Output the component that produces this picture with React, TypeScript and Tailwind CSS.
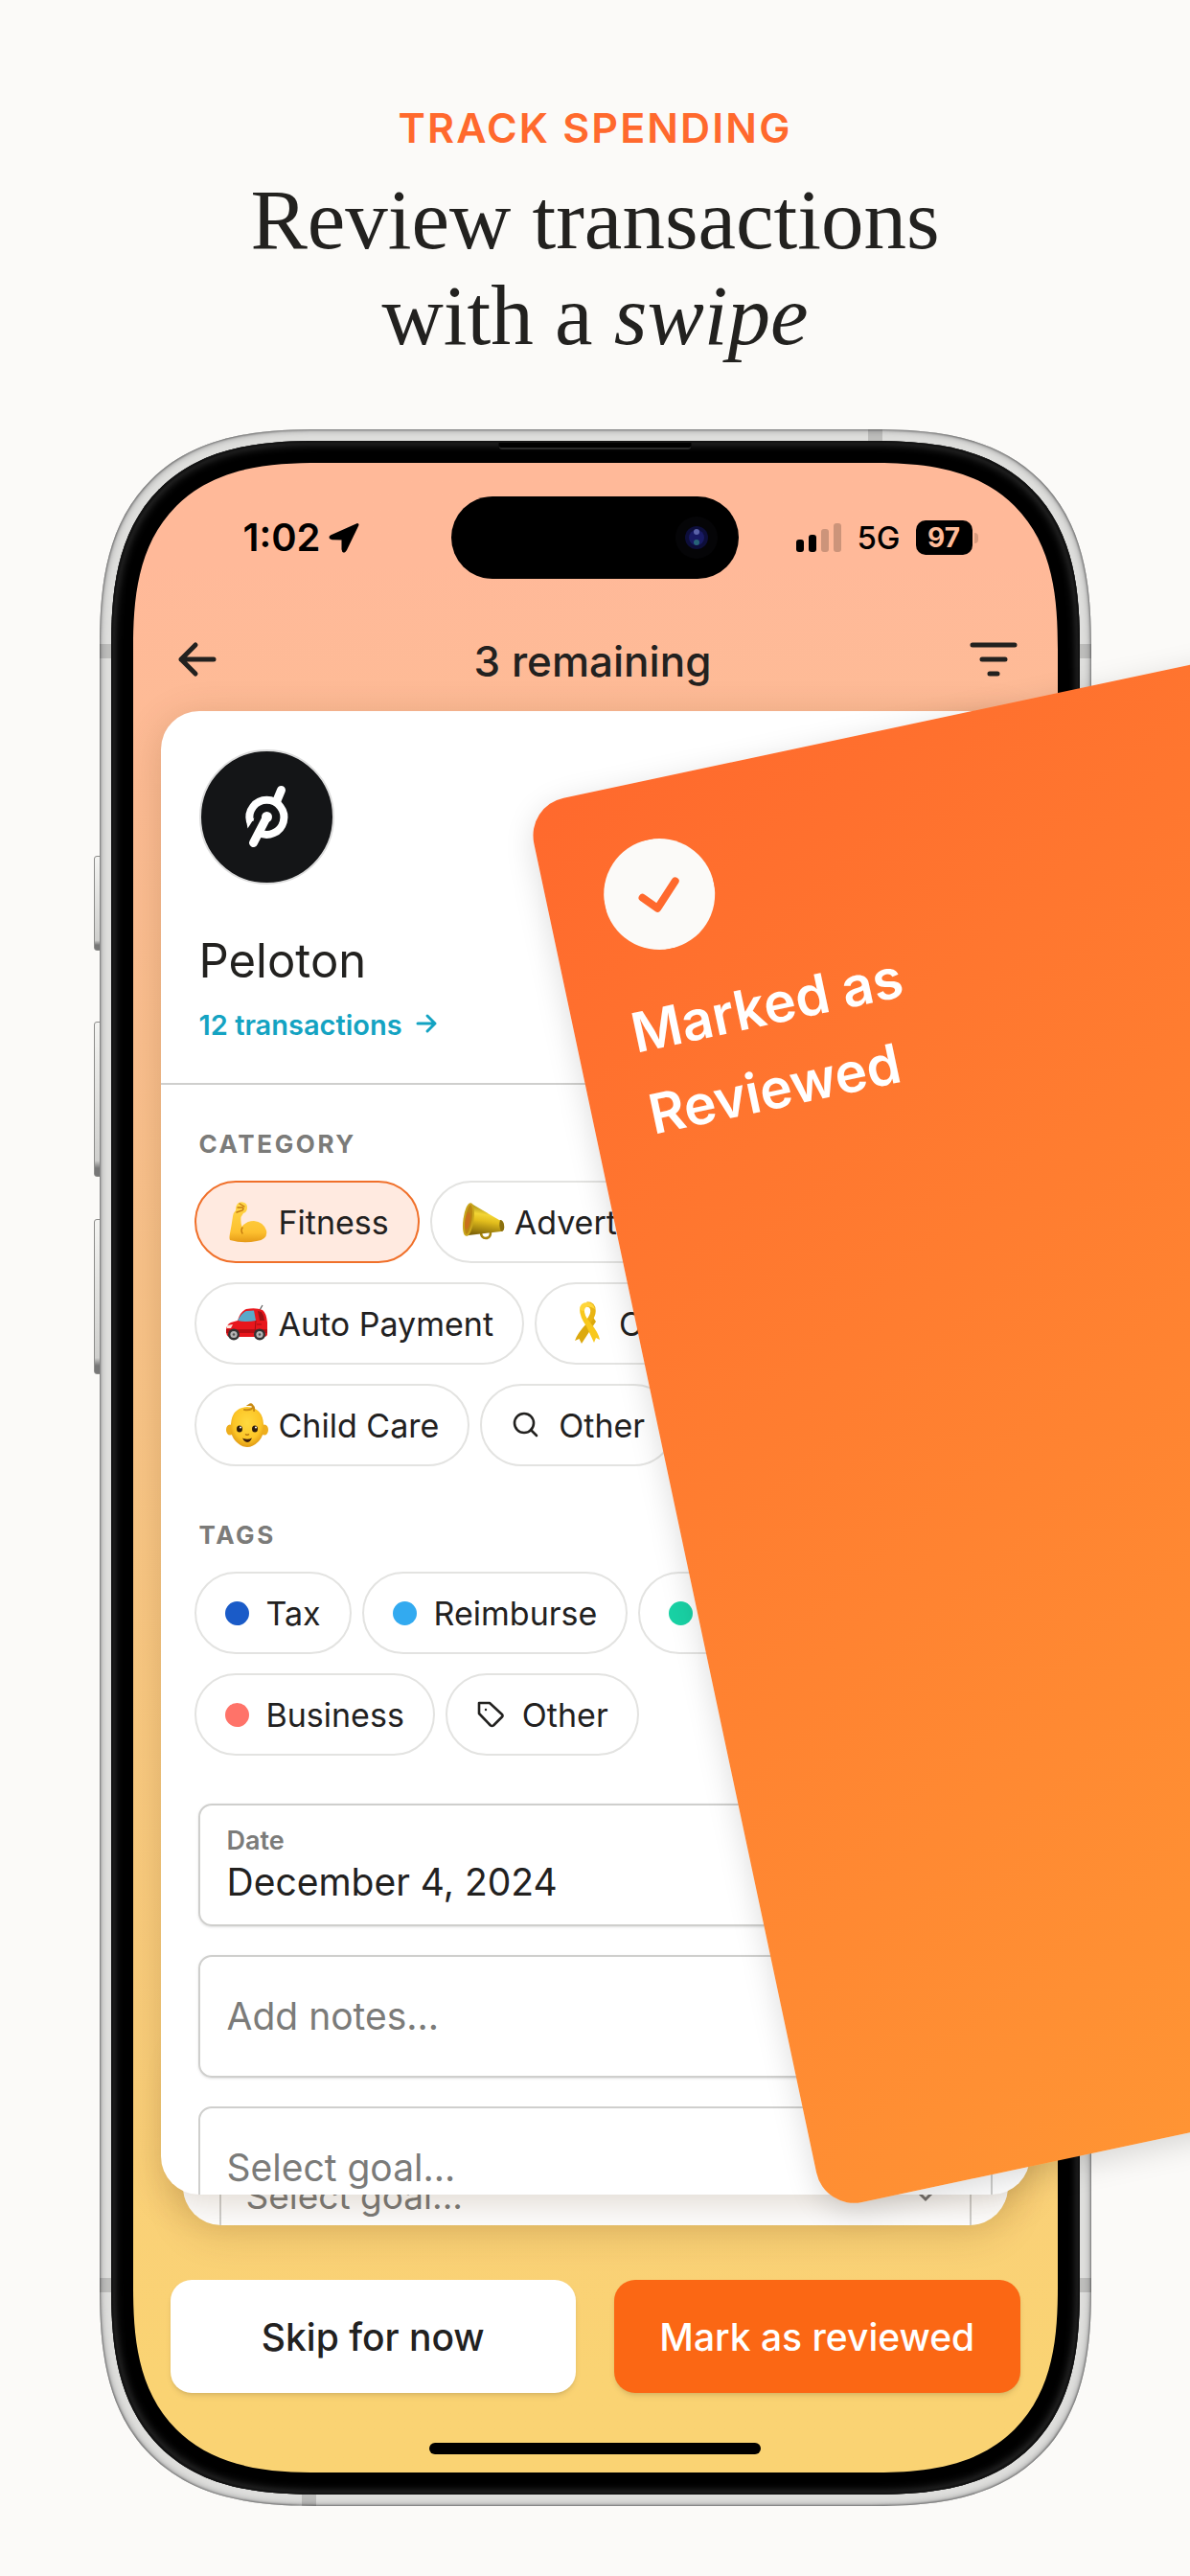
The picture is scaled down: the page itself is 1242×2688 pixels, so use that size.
import type { ReactNode } from "react";
import clsx from "clsx";

const categories = [
  { label: "Fitness", icon: <Biceps />, selected: true },
  { label: "Advertising", icon: <Megaphone /> },
  { label: "Auto Payment", icon: <Car /> },
  { label: "Charity", icon: <Ribbon /> },
  { label: "Child Care", icon: <Baby /> },
];

const tags = [
  { label: "Tax", dot: "bg-[#1a5bc8]" },
  { label: "Reimburse", dot: "bg-[#32aaf0]" },
  { label: "Medical", dot: "bg-[#19d2a5]" },
  { label: "Business", dot: "bg-[#ff7369]" },
];

export default function App() {
  return (
    <main className="overflow-hidden bg-[#fbfaf8] pt-[107px] pb-[73px] font-['Inter',sans-serif] text-[#22211f]">
      <header className="text-center">
        <p className="text-[43px] leading-[52px] font-semibold tracking-wider text-[#ff692d]">TRACK SPENDING</p>
        <h1 className="mt-5 font-['Liberation_Serif',serif] text-[89px] leading-[100px]">
          Review transactions<br />with a <em>swipe</em>
        </h1>
      </header>

      <div className="relative mx-auto mt-[69px] w-5/6">
        <SideButtons />
        <div className="relative rounded-[182px] bg-[#dededc] p-3 shadow-[inset_0_0_2px_1px_#777,inset_0_0_6px_2px_#aaa] [corner-shape:superellipse(1.4)] supports-[corner-shape:squircle]:rounded-[230px]">
          <Antennas />
          <div className="relative rounded-[170px] bg-black p-[23px] shadow-[inset_0_0_2px_2px_#111,inset_0_0_10px_3px_#3a3a3a] [corner-shape:superellipse(1.4)] supports-[corner-shape:squircle]:rounded-[218px]">
            <div className="absolute top-[2px] left-1/2 h-[7px] w-[201px] -translate-x-1/2 rounded-b-sm border-b-2 border-[#2a2a2a] bg-black" />
            <Screen />
          </div>
        </div>
        <ReviewedCard />
      </div>
    </main>
  );
}

function Screen() {
  return (
    <div className="overflow-hidden rounded-[148px] bg-linear-to-b from-[#ffb999] from-5% via-[#f9c38a] via-40% to-[#fad373] to-95% pt-[35px] pb-[19px] [corner-shape:superellipse(1.4)] supports-[corner-shape:squircle]:rounded-[195px]">
      <StatusBar />

      <nav className="mt-[54px] mb-6 flex h-[60px] items-center justify-between pr-[41px] pl-[46px]">
        <button aria-label="Back">
          <svg width="42" height="40" viewBox="0 0 42 40" fill="none" stroke="#22211f" strokeWidth="5" strokeLinecap="round" strokeLinejoin="round">
            <path d="M38 20H4M19 5L4 20L19 35" />
          </svg>
        </button>
        <h2 className="mt-1 text-[44px] leading-[52px] font-medium">3 remaining</h2>
        <button aria-label="Filter">
          <svg width="52" height="40" viewBox="0 0 52 40" stroke="#22211f" strokeWidth="5" strokeLinecap="round">
            <path d="M4 5H48M14 20H38M22 35H30" />
          </svg>
        </button>
      </nav>

      <div className="relative mx-[29px] pb-8">
        <div aria-hidden="true" className="absolute inset-x-[23px] bottom-0 h-[200px] overflow-hidden rounded-[40px] bg-white px-[38px] pt-[109px] shadow-[0_8px_40px_rgba(90,50,0,0.18)]">
          <GoalField id="next-goal" small />
        </div>
        <TransactionCard />
      </div>

      <div className="mt-[57px] grid grid-cols-2 gap-10 px-[39px] text-[39px] font-medium">
        <button className="h-[118px] rounded-[22px] bg-white pt-[2px] shadow-md">Skip for now</button>
        <button className="h-[118px] rounded-[22px] bg-[#fb6714] pt-[2px] text-white shadow-md">Mark as reviewed</button>
      </div>
      <div className="mx-auto mt-[52px] h-3 w-[346px] rounded-full bg-black" />
    </div>
  );
}

function StatusBar() {
  return (
    <div className="grid grid-cols-[1fr_auto_1fr] items-center text-black">
      <div className="flex items-center gap-2 pl-[115px]">
        <span className="text-[40px] leading-[52px] font-semibold">1:02</span>
        <svg width="34" height="34" viewBox="0 0 34 34" fill="black" stroke="black" strokeWidth="3" strokeLinejoin="round">
          <path d="M31 3.5L4 15.5Q1.500 17 5 17.800L16 18V29Q16.500 33 18.500 29.500Z" />
        </svg>
      </div>
      <div className="flex h-[86px] w-[300px] items-center justify-end rounded-full bg-black pr-[21px]">
        <svg width="46" height="46" viewBox="0 0 46 46">
          <circle cx="23" cy="23" r="22" fill="#050507" />
          <circle cx="23" cy="23" r="12" fill="#0d0e3a" />
          <circle cx="23" cy="23" r="8" fill="#181a63" />
          <circle cx="23" cy="17" r="3" fill="#5a62a8" />
          <circle cx="23" cy="28" r="3" fill="#276377" />
        </svg>
      </div>
      <div className="flex items-center justify-end gap-4 pr-[83px]">
        <svg width="47" height="30" viewBox="0 0 47 30">
          <rect x="0" y="17" width="8" height="13" rx="3" />
          <rect x="13" y="12" width="8" height="18" rx="3" />
          <rect x="26" y="6" width="8" height="24" rx="3" opacity="0.2" />
          <rect x="39" y="0" width="8" height="30" rx="3" opacity="0.2" />
        </svg>
        <span className="text-[33px] leading-[40px] font-medium">5G</span>
        <div className="flex items-center gap-[2px]">
          <span className="w-[59px] rounded-[10px] bg-black text-center text-[28px] leading-[36px] font-bold text-[#ffbb99]">97</span>
          <span className="h-[11px] w-1 rounded-r-full bg-[#d79a7d]" />
        </div>
      </div>
    </div>
  );
}

function TransactionCard() {
  return (
    <section className="relative h-[1548px] overflow-hidden rounded-[40px] bg-white shadow-[0_8px_40px_rgba(90,50,0,0.2)]">
      <div className="border-b-2 border-[#cfcfcd] px-10 pt-[40px] pb-[42px]">
        <PelotonLogo />
        <h3 className="mt-[50px] text-[49px] leading-[60px]">Peloton</h3>
        <a href="#transactions" className="mt-[19px] flex items-center gap-[13px] text-[29px] leading-[36px] font-semibold text-[#14a3c2]">
          12 transactions
          <svg className="mb-1" width="24" height="24" viewBox="0 0 24 24" fill="none" stroke="currentColor" strokeWidth="3" strokeLinecap="round" strokeLinejoin="round">
            <path d="M3 12H21M13 4L21 12L13 20" />
          </svg>
        </a>
      </div>

      <SectionTitle>CATEGORY</SectionTitle>
      <div className="mt-5 flex flex-wrap gap-x-[11px] gap-y-5 px-[35px]">
        {categories.map((c) => (
          <Chip key={c.label} selected={c.selected}>
            <span className="mr-[10px]">{c.icon}</span>
            {c.label}
          </Chip>
        ))}
        <Chip>
          <svg className="mr-5" width="30" height="30" viewBox="0 0 30 30" fill="none" stroke="currentColor" strokeWidth="2.600" strokeLinecap="round">
            <circle cx="14" cy="13" r="10" />
            <path d="M21 20L27 26" />
          </svg>
          Other
        </Chip>
      </div>

      <div className="h-[10px]" />
      <SectionTitle>TAGS</SectionTitle>
      <div className="mt-5 flex flex-wrap gap-x-[11px] gap-y-5 px-[35px]">
        {tags.map((t) => (
          <Chip key={t.label}>
            <span className={clsx("mr-[18px] size-[25px] rounded-full", t.dot)} />
            {t.label}
          </Chip>
        ))}
        <Chip>
          <svg className="mr-[18px]" width="30" height="30" viewBox="0 0 30 30" fill="none" stroke="currentColor" strokeWidth="2.600" strokeLinejoin="round">
            <path d="M3 3H14L27 15Q28 16.500 27 17.500L18 26.500Q16.500 27.500 15 26.500L3 14Z" />
            <circle cx="10" cy="10" r="1.200" fill="currentColor" stroke="none" />
          </svg>
          Other
        </Chip>
      </div>

      <div className="mt-[50px] flex flex-col gap-[30px] px-[39px]">
        <div className="flex h-[128px] flex-col justify-center rounded-[14px] border-2 border-[#cfcfcd] px-7 shadow-sm">
          <label htmlFor="date" className="text-[27px] leading-[36px] font-semibold text-[#7b7b79]">Date</label>
          <input id="date" type="text" defaultValue="December 4, 2024" className="h-[50px] w-full text-[39px] outline-none" />
        </div>
        <div className="flex h-[128px] items-center rounded-[14px] border-2 border-[#cfcfcd] px-7 shadow-sm">
          <input aria-label="Notes" type="text" placeholder="Add notes..." className="h-[52px] w-full text-[39px] outline-none placeholder:text-[#7b7b79]" />
        </div>
        <GoalField id="goal" />
      </div>
    </section>
  );
}

function SectionTitle({ children }: { children: ReactNode }) {
  return <h4 className="mt-[44px] px-10 text-[26px] leading-[36px] font-bold tracking-widest text-[#7b7b79]">{children}</h4>;
}

function Chip({ selected, children }: { selected?: boolean; children: ReactNode }) {
  return (
    <button
      className={clsx(
        "flex h-[86px] items-center rounded-full border-2 px-[30px] text-[34px]",
        selected ? "border-[#f0702a] bg-[#ffeae0]" : "border-[#e3e3e1]",
      )}
    >
      {children}
    </button>
  );
}

function GoalField({ id, small }: { id: string; small?: boolean }) {
  return (
    <div className={clsx("relative flex items-center rounded-[14px] border-2 border-[#cfcfcd]", small ? "h-[122px] px-[26px] text-[37px]" : "h-[128px] px-7 text-[39px]")}>
      <select id={id} aria-label="Goal" className="w-full appearance-none text-[#7b7b79] outline-none">
        <option>Select goal...</option>
      </select>
      <svg className="absolute right-[36px]" width="20" height="14" viewBox="0 0 20 14" fill="none" stroke="#777" strokeWidth="3">
        <path d="M2 2L10 10L18 2" />
      </svg>
    </div>
  );
}

function ReviewedCard() {
  return (
    <div className="absolute top-[393px] left-[43%] h-[1498px] w-[905px] origin-top-left -rotate-12 rounded-[40px] bg-linear-150 from-[#ff692d] to-[#ff9b35] px-[59px] pt-[61px] shadow-[0_8px_32px_rgba(0,0,0,0.15)]">
      <svg width="116" height="116" viewBox="0 0 116 116" fill="none">
        <circle cx="58" cy="58" r="58" fill="#fbfaf8" />
        <path d="M40 58L53 72L77 48" stroke="#ff692d" strokeWidth="8" strokeLinecap="round" strokeLinejoin="round" />
      </svg>
      <p className="mt-[35px] text-[57px] leading-[87px] font-semibold text-white">Marked as<br />Reviewed</p>
    </div>
  );
}

function SideButtons() {
  const key = "absolute left-[-6px] w-[10px] rounded-l-[3px] border border-[#8d8d8b] bg-linear-to-b from-[#f4f4f2] from-0% via-[#cfcfcd] via-90% to-[#777] to-95%";
  return (
    <>
      <span className={clsx(key, "top-[445px] h-[99px]")} />
      <span className={clsx(key, "top-[618px] h-[162px]")} />
      <span className={clsx(key, "top-[824px] h-[162px]")} />
    </>
  );
}

function Antennas() {
  return (
    <>
      <span className="absolute top-[224px] left-0 h-[15px] w-3 bg-black/15" />
      <span className="absolute bottom-[223px] left-0 h-[15px] w-3 bg-black/15" />
      <span className="absolute top-[224px] right-0 h-[15px] w-3 bg-black/15" />
      <span className="absolute right-0 bottom-[223px] h-[15px] w-3 bg-black/15" />
      <span className="absolute top-0 right-[218px] h-3 w-[15px] bg-black/15" />
      <span className="absolute bottom-0 left-[211px] h-3 w-[15px] bg-black/15" />
    </>
  );
}

function PelotonLogo() {
  return (
    <svg width="141" height="141" viewBox="-70.500 -70.500 141 141" fill="none" stroke="white">
      <circle r="69.500" fill="#141517" stroke="#dcdcdc" strokeWidth="2" />
      <path d="M-17.500 5A18 18 0 1 1 -9 16" strokeWidth="8" />
      <path d="M-21.500 4L-20 12L-13 1Z" fill="white" stroke="none" />
      <path d="M0 0L-14 27" strokeWidth="9" strokeLinecap="round" />
      <path d="M10 -16L15 -28" strokeWidth="9" strokeLinecap="round" />
      <circle r="5.500" fill="white" stroke="none" />
    </svg>
  );
}

function Biceps() {
  return (
    <svg width="46" height="46" viewBox="0 0 46 46">
      <defs>
        <linearGradient id="arm" x1="0" y1="0" x2="0" y2="1">
          <stop stopColor="#ffd84a" />
          <stop offset="0.750" stopColor="#fdc02f" />
          <stop offset="1" stopColor="#e59a17" />
        </linearGradient>
      </defs>
      <path d="M13 4Q16 1 20 3Q23 4 23 8Q23 13 19 14L16.500 18Q16 24 17.500 28Q22 22 30 22Q40 23 43 32Q45 41 33 43Q19 46 5 42Q4 40 5 35Q7 25 8 17Q8 14 11 11Q11 6 13 4Z" fill="url(#arm)" />
      <path d="M18 29Q16 32 18 35M13 8L18 8Q20 9 18 11L12 13M15 4L20 7" fill="none" stroke="#c47a10" strokeWidth="1.400" strokeLinecap="round" />
    </svg>
  );
}

function Megaphone() {
  return (
    <svg width="46" height="46" viewBox="0 0 46 46">
      <defs>
        <linearGradient id="horn" x1="0.600" y1="0" x2="0.400" y2="1">
          <stop stopColor="#8f7a12" />
          <stop offset="0.350" stopColor="#f3d534" />
          <stop offset="0.550" stopColor="#e2bd1c" />
          <stop offset="1" stopColor="#7d6208" />
        </linearGradient>
      </defs>
      <path d="M21 34Q21 40 26 40Q31 40 31 34" fill="none" stroke="#a8860f" strokeWidth="2.500" />
      <path d="M11 4L40 21Q44 21 45 26Q46 33 42 33L8 37Q2 34 3 22Q5 5 11 4Z" fill="url(#horn)" />
      <ellipse cx="8" cy="20.500" rx="4.500" ry="16.500" transform="rotate(8 8 20.500)" fill="#b98512" stroke="#c9a51c" strokeWidth="2" />
      <ellipse cx="7" cy="22" rx="2.500" ry="9" transform="rotate(8 7 22)" fill="#c96f1c" />
      <path d="M41 21Q44 21 45 26Q46 33 42 33Q39 27 41 21Z" fill="#8a6f10" />
    </svg>
  );
}

function Car() {
  return (
    <svg width="46" height="46" viewBox="0 0 46 46">
      <path d="M36 9L39 4" stroke="#555" strokeWidth="1.200" />
      <path d="M13 20Q16 10 22 8Q32 6 39 9Q43 12 44 22V34Q44 37 40 37H4Q1 36 1 31Q1 24 6 22Z" fill="#e8161c" />
      <path d="M13 20Q17 12 22 10L30 9.500L32 20Q22 22 13 20Z" fill="#58a9c9" />
      <path d="M34 10L38 11Q41 15 41 20H36Z" fill="#9b1216" />
      <path d="M1 29H44V33H1Z" fill="#b80d13" />
      <path d="M2 25L8 24L6 28H2Z" fill="#f8e3da" />
      <path d="M32 20L31 33M33 24H38" stroke="#a10d12" strokeWidth="1" fill="none" />
      {[9, 36].map((x) => (
        <g key={x}>
          <circle cx={x} cy="34.500" r="6" fill="#333" />
          <circle cx={x} cy="34.500" r="3.600" fill="#b5b5b5" />
          <circle cx={x} cy="34.500" r="1.300" fill="#555" />
        </g>
      ))}
    </svg>
  );
}

function Ribbon() {
  return (
    <svg width="46" height="46" viewBox="0 0 46 46">
      <path d="M28 15L32 21L17 44L14.500 39L10 41Q12 34 23 22Z" fill="#dca90e" />
      <path d="M22.500 3Q29 3 29 10Q29 15 24 21" fill="none" stroke="#e9b413" strokeWidth="5.500" />
      <path d="M15 8Q15 16 22 26L30 43L32 38L36 40Q35 33 26 22Q19 14 20 8Z" fill="#f8c81d" />
      <path d="M15 9Q15 1 23 1Q29 1 31 8Q27 5 23 5.500Q20 6 20 10Z" fill="#ffd63a" />
    </svg>
  );
}

function Baby() {
  return (
    <svg width="46" height="46" viewBox="0 0 46 46">
      <defs>
        <radialGradient id="face" cx="0.500" cy="0.400" r="0.600">
          <stop stopColor="#ffd93f" />
          <stop offset="0.700" stopColor="#fcc526" />
          <stop offset="1" stopColor="#e09a14" />
        </radialGradient>
      </defs>
      <ellipse cx="5" cy="28" rx="4" ry="5.500" fill="#eeae1d" />
      <ellipse cx="41" cy="28" rx="4" ry="5.500" fill="#eeae1d" />
      <path d="M23 4Q39 5 40 22Q41 34 35 40Q29 46 23 46Q17 46 11 40Q5 34 6 22Q7 5 23 4Z" fill="url(#face)" />
      <path d="M20 7Q28 8 29 4Q28 0 25 2Q31 2 30 8" fill="none" stroke="#c98a12" strokeWidth="2" strokeLinecap="round" />
      <ellipse cx="15" cy="27" rx="3" ry="3.600" fill="#2d1c0b" />
      <ellipse cx="31" cy="27" rx="3" ry="3.600" fill="#2d1c0b" />
      <circle cx="16" cy="25.500" r="1" fill="white" />
      <circle cx="32" cy="25.500" r="1" fill="white" />
      <path d="M21 32.500Q23 34 25 32.500" stroke="#b5720c" strokeWidth="1.500" fill="none" />
      <path d="M18 36.500Q23 39 28 36.500Q26 41 23 41Q20 41 18 36.500Z" fill="#3b1d0c" />
    </svg>
  );
}
